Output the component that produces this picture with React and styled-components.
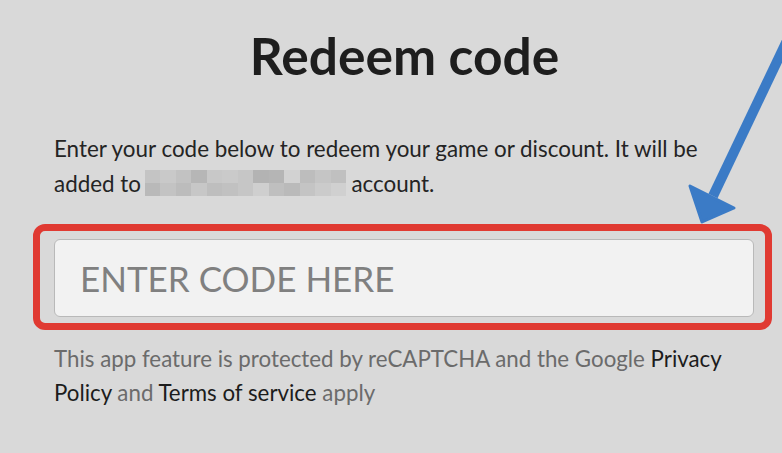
import React from "react";
import styled, { createGlobalStyle } from "styled-components";

const Global = createGlobalStyle`
  html, body { margin: 0; padding: 0; background: #d9d9d9; }
  body { font-family: Lato, "Noto Sans", sans-serif; overflow: hidden; }
`;

const Page = styled.div`
  position: relative;
  width: 782px;
  height: 453px;
  box-sizing: border-box;
  padding: 23px 27px 0 54px;
  background: #d9d9d9;
  color: #222;
`;

const Title = styled.h1`
  margin: 0;
  text-align: center;
  font-family: Lato, sans-serif;
  font-weight: 700;
  font-size: 51.5px;
  line-height: 64px;
  color: #1e1e1e;
`;

const Intro = styled.p`
  margin: 43.5px 0 0;
  font-size: 22.4px;
  line-height: 35px;
  color: #242424;
`;

const Mosaic = styled.span`
  display: inline-grid;
  grid-template-columns: repeat(13, 15.5px);
  grid-template-rows: repeat(2, 13px);
  vertical-align: bottom;
  margin: 0 5px 4.5px 4px;
`;

const Cell = styled.span`
  display: block;
  background: ${(p) => p.$c};
`;

const Highlight = styled.div`
  margin: 23.5px -17px 0 -21px;
  border: 7px solid #e03a32;
  border-radius: 12px;
  padding: 8px 11px 6px 14px;
`;

const CodeInput = styled.input`
  display: block;
  width: 100%;
  height: 78px;
  box-sizing: border-box;
  border: 1px solid #b9b9b9;
  border-radius: 6px;
  background: #f2f2f2;
  padding: 0 0 0 25px;
  font-family: Lato, sans-serif;
  font-size: 35px;
  color: #333;
  outline: none;
  &::placeholder { color: #808080; opacity: 1; }
`;

const Note = styled.p`
  margin: 12.3px 0 0;
  font-size: 22.3px;
  line-height: 33.5px;
  color: #6b6b6b;
`;

const NoteLink = styled.a`
  color: #1c1c1c;
  text-decoration: none;
`;

const Arrow = styled.svg`
  position: absolute;
  left: 0;
  top: 0;
  pointer-events: none;
`;

const shades = [
  "#c4c4c4","#c9c9c9","#c2c2c2","#b6b6b6","#c8c8c8","#cacaca","#c6c6c6","#b3b3b3","#b5b5b5","#d2d2d2","#bdbdbd","#c5c5c5","#c0c0c0",
  "#b9b9b9","#c3c3c3","#bcbcbc","#c7c7c7","#bebebe","#c1c1c1","#c6c6c6","#cfcfcf","#bfbfbf","#bababa","#c4c4c4","#cbcbcb","#d0d0d0",
];

export default function App() {
  return (
    <>
      <Global />
      <Page>
        <Title>Redeem code</Title>
        <Intro>
          Enter your code below to redeem your game or discount. It will be
          added to
          <Mosaic aria-hidden="true">
            {shades.map((c, i) => (
              <Cell key={i} $c={c} />
            ))}
          </Mosaic>
          account.
        </Intro>
        <Highlight>
          <CodeInput placeholder="ENTER CODE HERE" />
        </Highlight>
        <Note>
          This app feature is protected by reCAPTCHA and the Google{" "}
          <NoteLink href="#">Privacy Policy</NoteLink> and{" "}
          <NoteLink href="#">Terms of service</NoteLink> apply
        </Note>
        <Arrow width="782" height="453" viewBox="0 0 782 453">
          <line x1="792" y1="30" x2="713" y2="196" stroke="#3b7bc6" strokeWidth="10" strokeLinecap="butt" />
          <polygon points="702,222 690,186 734,208" fill="#3b7bc6" stroke="#3b7bc6" strokeWidth="3" strokeLinejoin="round" />
        </Arrow>
      </Page>
    </>
  );
}
